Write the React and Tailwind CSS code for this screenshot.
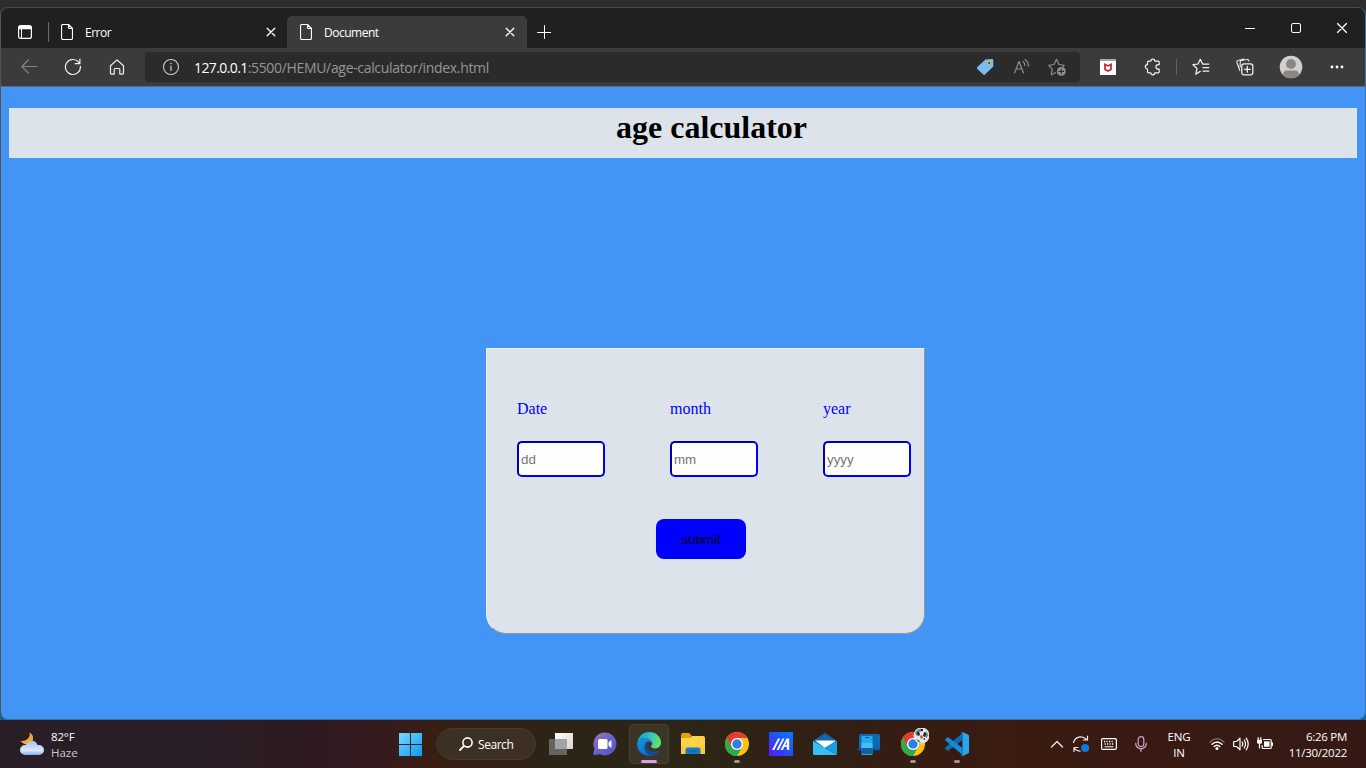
import React from "react";

const ui = "font-['Open_Sans','Noto_Sans',sans-serif]";

function Svg({ w = 24, h = 24, children, className = "" }) {
  return (
    <svg
      width={w}
      height={h}
      viewBox={`0 0 ${w} ${h}`}
      fill="none"
      stroke="none"
      strokeLinecap="round"
      strokeLinejoin="round"
      className={`block shrink-0 ${className}`}
    >
      {children}
    </svg>
  );
}

function Slot({ className, children }) {
  return <div className={`flex h-full shrink-0 items-center justify-center ${className}`}>{children}</div>;
}

const FileIcon = () => (
  <Svg w={12} h={16}>
    <path d="M2 .5h5.5l4 4V14a1.5 1.5 0 0 1-1.500 1.500H2A1.500 1.500 0 0 1 .5 14V2A1.500 1.500 0 0 1 2 .5zM7.500.5V3.500a1 1 0 0 0 1 1h3" stroke="#fff" strokeWidth="1.2" />
  </Svg>
);

const CloseIcon = ({ s = 8 }) => (
  <Svg w={10} h={10}>
    <path d={s === 8 ? "M1.200 1.200l7.600 7.600M8.800 1.200L1.200 8.800" : "M.2.2l9.600 9.600M9.800.2L.2 9.800"} stroke="#fff" strokeWidth="1.300" />
  </Svg>
);

function TabStrip() {
  return (
    <div className="flex h-10 shrink-0 bg-[#202020]">
      <div className="flex h-full flex-1 pt-2">
        <Slot className="w-[47px]">
          <Svg w={14} h={14}>
            <rect x=".6" y=".6" width="12.800" height="12.800" rx="2" stroke="#fff" strokeWidth="1.200" />
            <path d="M1 1h12v3.200H1z" fill="#fff" />
            <path d="M3.500 4v9" stroke="#fff" strokeWidth="1" />
          </Svg>
        </Slot>
        <div className="mt-1.5 h-5 w-px bg-[#6a6a6a]" />
        <div className="flex h-full w-[238px] items-center pr-[11px] pl-3">
          <FileIcon />
          <span className="ml-3 flex-1 pt-px text-[12px] leading-4 font-medium tracking-[-0.5px] text-white">Error</span>
          <CloseIcon />
        </div>
        <div className="flex h-full w-[240px] items-center rounded-t-[5px] bg-[#3b3b3b] pr-3 pl-[13px]">
          <FileIcon />
          <span className="ml-3 flex-1 pt-px text-[12px] leading-4 font-medium tracking-[-0.5px] text-white">Document</span>
          <CloseIcon />
        </div>
        <Slot className="w-[34px]">
          <Svg w={14} h={14}>
            <path d="M7.500.5v13M.5 7.500h13.500" stroke="#fff" strokeWidth="1" />
          </Svg>
        </Slot>
      </div>
      <div className="flex h-full">
        <Slot className="w-[46px]">
          <Svg w={10} h={10}><path d="M.5 5.500h9" stroke="#fff" /></Svg>
        </Slot>
        <Slot className="w-[46px]">
          <Svg w={10} h={10}><rect x=".5" y=".5" width="9" height="9" rx="1.500" stroke="#fff" /></Svg>
        </Slot>
        <Slot className="w-[46px]"><CloseIcon s={10} /></Slot>
      </div>
    </div>
  );
}

function Toolbar() {
  return (
    <div className="flex h-[39px] shrink-0 items-center border-b border-[#68686a] bg-[#3b3b3b]">
      <Slot className="ml-1.5 w-11">
        <Svg w={16} h={16}><path d="M15.500 7.500H.8M7.300 1L.8 7.500 7.300 14" stroke="#858585" strokeWidth="1.100" /></Svg>
      </Slot>
      <Slot className="w-11">
        <Svg w={18} h={18}><path d="M16.400 8.300A7.500 7.500 0 1 1 14.700 4.200L15.900 5.600M15.900 1v4.700h-4.700" stroke="#f2f2f2" strokeWidth="1.200" /></Svg>
      </Slot>
      <Slot className="w-11">
        <Svg w={16} h={16}><path d="M1.500 6.800L8 .9l6.500 5.900v7.300a1 1 0 0 1-1 1h-2.700v-4.600a1 1 0 0 0-1-1H6.200a1 1 0 0 0-1 1v4.600H2.500a1 1 0 0 1-1-1z" stroke="#f2f2f2" strokeWidth="1.200" /></Svg>
      </Slot>
      <div className="ml-1.5 flex h-[30px] w-[935px] items-center rounded-[4px] bg-[#2b2b2b] pr-[5px] pl-[17px]">
        <Svg w={18} h={18}>
          <circle cx="9" cy="9" r="7.500" stroke="#cfcfcf" strokeWidth="1.100" />
          <path d="M9 8v4.500" stroke="#cfcfcf" strokeWidth="1.200" />
          <circle cx="9" cy="5.600" r=".8" fill="#cfcfcf" />
        </Svg>
        <div className="ml-3.5 flex-1 pt-px text-[14px] leading-5 tracking-[-0.33px] whitespace-nowrap text-[#969696]">
          <span className="font-medium tracking-[-0.6px] text-white">127.0.0.1</span>:5500/HEMU/age-calculator/index.html
        </div>
        <Slot className="w-9">
          <Svg w={18} h={18}>
            <path d="M9.500 1.500L16 1q1.400 0 1.300 1.400v6L9 16.500q-.9.800-1.800 0L1.300 11q-.9-1 0-1.900z" fill="#7cbcf0" />
            <circle cx="13.200" cy="5" r="2" fill="#e0b42c" /><circle cx="13.200" cy="5" r=".9" fill="#2f3438" />
          </Svg>
        </Slot>
        <Slot className="w-9">
          <Svg w={18} h={18}>
            <path d="M2.500 15L7 3.500 11.500 15M4.200 11h5.600" stroke="#8c8c8c" strokeWidth="1.200" />
            <path d="M11 3.500q2 1.700 1.800 4M13 1.500q3.800 2.500 3.300 6.600" stroke="#8c8c8c" strokeWidth="1.200" />
          </Svg>
        </Slot>
        <Slot className="w-9">
          <Svg w={18} h={18}>
            <path d="M7.500 14.700l-4.200 2.100.9-5.600L.8 7.300l5.200-.8L8.500 1.300l2.500 5.200 5.200.8-1 1.200" stroke="#8c8c8c" strokeWidth="1.200" />
            <circle cx="13.300" cy="13.400" r="4.400" fill="#919191" />
            <path d="M13.300 11.100v4.600M11 13.400h4.600" stroke="#2b2b2b" strokeWidth="1.100" />
          </Svg>
        </Slot>
      </div>
      <Slot className="ml-1.5 w-11">
        <Svg w={16} h={16}>
          <path d="M0 0h16v16H0z" fill="#fff" /><path d="M0 0h16v2H0z" fill="#aaa6a6" />
          <path d="M5 10.400V5.300l3 1.600 3-1.600v5.100L8 12z" stroke="#c9202c" strokeWidth="1.700" strokeLinejoin="miter" />
        </Svg>
      </Slot>
      <Slot className="w-[46px]">
        <Svg w={18} h={18}>
          <path d="M4.500 3.200h2.300a2 2 0 0 1 4 0h3.400q1 0 1 1v2.400h-1a2.200 2.200 0 0 0 0 4.600h1v2.600q0 1-1 1h-3.400a2 2 0 0 1-4 0H4.500q-1 0-1-1v-2.800a2.150 2.150 0 0 1 0-4.300V4.200q0-1 1-1z" stroke="#f2f2f2" strokeWidth="1.200" />
        </Svg>
      </Slot>
      <div className="h-4 w-px bg-[#606060]" />
      <Slot className="w-12">
        <Svg w={18} h={18}>
          <path d="M8.300 13.300l-4.400 2.900 1.100-5.700L1 6.700l5-.7 2.300-4.700L10.600 6h6.200M11 9.500h5.800M11 13h5.800" stroke="#f2f2f2" strokeWidth="1.250" />
        </Svg>
      </Slot>
      <Slot className="w-10">
        <Svg w={18} h={18}>
          <path d="M3.800 12.500L1 4.700q-.5-1.600 1-2.200L7.800 1M4.200 9V4q0-1.500 1.500-1.500l5-1q1.700-.4 2.200 1.500" stroke="#e5e5e5" strokeWidth="1.200" />
          <rect x="5.800" y="5.800" width="11" height="11" rx="2.200" fill="#3b3b3b" stroke="#f2f2f2" strokeWidth="1.250" />
          <path d="M11.300 8.400v5.800M8.400 11.300h5.800" stroke="#f2f2f2" strokeWidth="1.300" />
        </Svg>
      </Slot>
      <Slot className="w-[52px]">
        <Svg w={24} h={24}>
          <clipPath id="avatar"><circle cx="12" cy="12" r="11.300" /></clipPath>
          <g clipPath="url(#avatar)">
            <path d="M0 0h24v24H0z" fill="#d2d0ce" />
            <circle cx="12" cy="9" r="5" fill="#8c8782" />
            <path d="M4 24q-1-8 3-8.500h10q4 .5 3 8.500z" fill="#8c8782" />
          </g>
        </Svg>
      </Slot>
      <Slot className="w-10">
        <Svg w={14} h={4}>
          <circle cx="2" cy="2" r="1.400" fill="#fff" /><circle cx="7" cy="2" r="1.400" fill="#fff" /><circle cx="12" cy="2" r="1.400" fill="#fff" />
        </Svg>
      </Slot>
    </div>
  );
}

const fields = [
  { label: "Date", hint: "dd" },
  { label: "month", hint: "mm" },
  { label: "year", hint: "yyyy" },
];

function Page() {
  return (
    <main className="flex flex-1 flex-col items-start bg-[#4295f5] px-2 pt-[21px]">
      <h1 className="h-[50px] w-full bg-[#dce3ea] pt-px pl-[57px] text-center font-['Liberation_Serif',serif] text-[32px] leading-[37px] font-bold text-black">
        age calculator
      </h1>
      <form className="mt-[190px] ml-[477px] flex h-[286px] w-[439px] flex-col rounded-b-[20px] border border-t-[#ececec] border-r-[#989898] border-b-[#989898] border-l-[#ececec] bg-[#dce3ea] pt-[51px] pl-[30px]">
        <div className="flex gap-[65px]">
          {fields.map((f) => (
            <label key={f.label} className="flex w-[88px] shrink-0 flex-col gap-[23px] font-['Liberation_Serif',serif] text-[16px] leading-[18px] text-[#0000ff]">
              {f.label}
              <input
                placeholder={f.hint}
                className="h-9 w-[88px] rounded-[5px] border-2 border-t-[#0000b0] border-r-[#0000f4] border-b-[#0000f4] border-l-[#0000b0] bg-white px-0.5 py-px font-['Liberation_Sans',sans-serif] text-[13.333px] text-black placeholder:text-[#757575]"
              />
            </label>
          ))}
        </div>
        <button type="button" className="mt-[42px] ml-[139px] h-10 w-[90px] rounded-lg bg-[#0000ff] pt-0.5 font-['Liberation_Sans',sans-serif] text-[13.333px] text-black">
          submit
        </button>
      </form>
    </main>
  );
}

const Chrome = ({ badge }) => (
  <Svg w={32} h={32}>
    <g strokeLinejoin="miter">
      <circle cx="16" cy="16" r="12" fill="#fbc116" />
      <path d="M16 10h10.400A12 12 0 0 0 5.600 10l5.200 9z" fill="#e33b2e" />
      <path d="M10.800 19L5.600 10A12 12 0 0 0 16 28l5.200-9z" fill="#2da94f" />
      <circle cx="16" cy="16" r="6" fill="#fff" /><circle cx="16" cy="16" r="4.700" fill="#2f7de9" />
    </g>
    {badge && (
      <g>
        <circle cx="24.500" cy="7.500" r="8" fill="#e4e9ea" />
        <path d="M18 5q2-4 6-4.500l2 2-4 2-2 4zM29 3l2.500 4-2 3-2-2zM19 11l3 1 2 3-3-1z" fill="#6d8388" />
        <path d="M20 4l2 0 1 3-2 1zM27 4l2 1-1 4-2-1zM24 1l2 0 0 2-2 0zM26 11l2-1 0 2z" fill="#171c20" />
        <path d="M23 8l2-1 1 3-2 1z" fill="#9b5c47" />
      </g>
    )}
  </Svg>
);

const Edge = () => (
  <Svg w={24} h={24}>
    <defs>
      <linearGradient id="eg" x1="0" y1="6" x2="24" y2="12" gradientUnits="userSpaceOnUse"><stop stopColor="#159bdf" /><stop offset=".5" stopColor="#35c1c4" /><stop offset="1" stopColor="#6bea4c" /></linearGradient>
      <linearGradient id="eb" x1="2" y1="7" x2="9" y2="24" gradientUnits="userSpaceOnUse"><stop stopColor="#1593dc" /><stop offset="1" stopColor="#0a6fc9" /></linearGradient>
    </defs>
    <path d="M.2 11C1 4.500 6 0 12.200 0 19 0 24 5 24 10.500c0 3.500-2.500 6-6 6-2.500 0-4-.9-4-1.900 0-.8 1.200-1.300 1.200-3C15.200 8.600 12 6 8 6 4.500 6 1.500 8 .2 11z" fill="url(#eg)" />
    <path d="M0 12C.5 8.500 4 6 8 6c4 0 7.200 2.400 7.200 5.600-1-1.600-2.500-2.300-4-2-3 .6-4.200 4-2.600 7.400 2.200 4.500 7.200 6.200 10.400 4.600A12 12 0 0 1 0 12z" fill="url(#eb)" />
    <path d="M9.500 10.500c-3 2.500-3 8 1 11.500 1.700 1.300 4 2 5.500 1.700 2.500-.6 4.600-2 6.300-4.300.3-.5 0-.9-.6-.6C16 21.500 10 18.500 9.500 14.500c-.1-1.500.3-3 1.500-4.300z" fill="#124c99" />
  </Svg>
);

const Folder = () => (
  <Svg w={24} h={24}>
    <path d="M0 3q0-2 2-2h6l3 3h-1L7 8H0z" fill="#dfa200" />
    <path d="M0 6h8l3-2h11q2 0 2 2v16H0z" fill="#ffd149" />
    <path d="M0 14h24v8H0z" fill="#fdc83b" />
    <path d="M4.500 22V18q0-2.500 2.500-2.500h10q2.500 0 2.500 2.500v4z" fill="#127cc5" /><path d="M8.500 19h7" stroke="#075e9d" />
  </Svg>
);

function TaskItem({ children, dot, active }) {
  return (
    <div className="flex h-12 w-11 shrink-0 items-center justify-center">
      <div className={active ? "relative flex size-10 items-center justify-center rounded-[4px] border border-[#484233] bg-[#3b3527]" : "relative flex size-10 items-center justify-center"}>
        {children}
        {active && <span className="absolute bottom-0 left-[11px] h-[3px] w-4 rounded-full bg-[#dc9ce4]" />}
        {dot && <span className="absolute bottom-px left-[17px] h-[3px] w-1.5 rounded-full bg-[#9d958b]" />}
      </div>
    </div>
  );
}

function Taskbar() {
  return (
    <footer className="flex h-12 shrink-0 items-center bg-[linear-gradient(90deg,#291e26_0px,#291e26_190px,#2e1a22_300px,#341a1d_380px,#391e14_430px,#332214_490px,#2c2516_570px,#2c2617_690px,#302114_790px,#361c12_910px,#3a1b12_1040px,#351914_1366px)] text-[12px] leading-4 text-white">
      <div className="flex w-[388px] items-center pl-5">
        <Svg w={24} h={24}>
          <defs><linearGradient id="cl" x1="0" y1="8" x2="0" y2="23" gradientUnits="userSpaceOnUse"><stop stopColor="#9fbdec" /><stop offset=".7" stopColor="#d8e8fd" /><stop offset="1" stopColor="#82a9e9" /></linearGradient></defs>
          <path d="M9.500 0q6 5 2.300 10.500Q6 15 .3 9q4.500.5 7.500-2.200Q10.500 4 9.500 0z" fill="#f4a72d" />
          <path d="M5 23a5 5 0 0 1 0-10h1a6 6 0 0 1 11.500 0H19a5 5 0 0 1 0 10z" fill="url(#cl)" />
        </Svg>
        <div className="ml-[7px] pt-0.5 text-[11.500px] tracking-[-0.15px]">
          <div className="font-medium">82°F</div>
          <div className="tracking-[0px] text-[#cdc8cb]">Haze</div>
        </div>
      </div>
      <Slot className="w-11">
        <Svg w={24} h={24}>
          <defs><linearGradient id="win" x1="0" y1="0" x2="24" y2="24" gradientUnits="userSpaceOnUse"><stop stopColor="#7adcff" /><stop offset="1" stopColor="#079bf4" /></linearGradient></defs>
          <path d="M1 1h11v11H1zM13 1h11v11H13zM1 13h11v11H1zM13 13h11v11H13z" fill="url(#win)" />
        </Svg>
      </Slot>
      <div className="mr-[3px] ml-1 flex h-8 w-[100px] items-center rounded-full border border-[#44392d] bg-[#3b3023] pl-[22px]">
        <Svg w={14} h={14}><circle cx="8.500" cy="5.500" r="4.600" stroke="#fff" strokeWidth="1.600" /><path d="M5 8.900L1 13" stroke="#fff" strokeWidth="1.800" /></Svg>
        <span className="ml-[5px] pt-0.5 font-medium tracking-[-0.45px]">Search</span>
      </div>
      <TaskItem>
        <Svg w={24} h={24}>
          <defs><linearGradient id="tv" x1="6" y1="1" x2="24" y2="17" gradientUnits="userSpaceOnUse"><stop stopColor="#fff" /><stop offset="1" stopColor="#d5d5d5" /></linearGradient></defs>
          <path d="M6 1h18v16H6z" fill="url(#tv)" /><path d="M0 7h18v16H0z" fill="#646464" /><path d="M6 7h12v10H6z" fill="#a3a3a3" />
        </Svg>
      </TaskItem>
      <TaskItem>
        <Svg w={24} h={24}>
          <defs><linearGradient id="chat" x1="2" y1="2" x2="20" y2="23" gradientUnits="userSpaceOnUse"><stop stopColor="#9b70b2" /><stop offset=".5" stopColor="#6764cc" /><stop offset="1" stopColor="#5058bd" /></linearGradient></defs>
          <path d="M1.500 23q-1.500 0-1.100-1.500l1.100-4.700A11.500 11.500 0 1 1 7 22.300z" fill="url(#chat)" />
          <rect x="5" y="7" width="9.500" height="10" rx="1.500" fill="#fff" /><path d="M15.500 10.500L18.500 8v8l-3-2.500z" fill="#fff" />
        </Svg>
      </TaskItem>
      <TaskItem active><Edge /></TaskItem>
      <TaskItem><Folder /></TaskItem>
      <TaskItem dot><Chrome /></TaskItem>
      <TaskItem>
        <Svg w={24} h={24}>
          <defs><linearGradient id="ma" x1="0" y1="24" x2="24" y2="0" gradientUnits="userSpaceOnUse"><stop stopColor="#5b18f4" /><stop offset=".5" stopColor="#234ef5" /><stop offset="1" stopColor="#087bff" /></linearGradient></defs>
          <path d="M0 0h24v24H0z" fill="url(#ma)" />
          <path d="M3 18L9 6.500h2.200L5.300 18zM7.500 18l6-11.500h2L9.700 18z" fill="#f5f6ff" />
          <path fillRule="evenodd" d="M11.500 18L17.500 6.500h2.700V18h-2.300v-3h-2.600L13.800 18zM16.300 13.200h1.600V10z" fill="#f5f6ff" />
        </Svg>
      </TaskItem>
      <TaskItem>
        <Svg w={24} h={24}>
          <path d="M0 9L12 1l12 8v7H0z" fill="#1464ad" /><path d="M2 8.500h20v1L12 16z" fill="#fff" />
          <path d="M0 9l24 14H1q-1 0-1-1z" fill="#35bff3" /><path d="M24 9v13q0 1-1 1L12 15.500z" fill="#189ee5" />
        </Svg>
      </TaskItem>
      <TaskItem>
        <Svg w={24} h={24}>
          <rect x="2" y="2" width="21" height="15" rx="1.500" fill="#1268ae" /><path d="M0 16.500h24l-1.500 2H1z" fill="#0b5595" />
          <rect x="4.500" y="4" width="11" height="19" rx="1.200" fill="#24a8ee" /><path d="M4.500 11h11v5h-11z" fill="#46bcf4" /><path d="M4.500 16h11v6h-11z" fill="#11629f" /><path d="M8.500 5.500h3.500" stroke="#07579a" />
        </Svg>
      </TaskItem>
      <TaskItem dot><Chrome badge /></TaskItem>
      <TaskItem dot>
        <Svg w={24} h={24}>
          <path d="M17.500 1v7L3.500 18.500q-.8.500-1.400 0L.5 17q-.8-.8 0-1.500z" fill="#0a6fb8" />
          <path d="M17.500 23v-7L3.500 5.500q-.8-.5-1.400 0L.5 7q-.8.800 0 1.500z" fill="#168bd5" />
          <path d="M17.500.1l5.500 2.400q1 .5 1 1.500v16q0 1-1 1.500l-5.500 2.400q-.9.200-1.600-.5.900.3 1.600-.7V1.300q-.7-1-1.600-.7.700-.7 1.600-.5z" fill="#29a6ef" />
        </Svg>
      </TaskItem>
      <div className="ml-auto flex h-full items-center">
        <Slot className="w-6"><Svg w={14} h={8}><path d="M1.500 7L7 1.500 12.500 7" stroke="#eee" strokeWidth="1.300" /></Svg></Slot>
        <Slot className="w-6">
          <Svg w={18} h={18}>
            <path d="M1.500 7.500C3 1.500 10 0 14.500 4.500M15.500 1v4h-4M2 16.500v-4h4M2.500 13.500q2 2.500 5.500 2.700" stroke="#f1eae8" strokeWidth="1.200" />
            <circle cx="13.200" cy="13" r="4" fill="#087bdc" />
          </Svg>
        </Slot>
        <Slot className="w-8">
          <Svg w={16} h={12}>
            <rect x=".6" y=".6" width="14.800" height="10.800" rx="1.200" stroke="#fff" strokeWidth="1.200" />
            <path d="M3 3.500h10M3.500 6h9.500" stroke="#fff" strokeWidth="1.300" strokeDasharray="1.200 1.300" strokeLinecap="butt" /><path d="M4 8.700h8" stroke="#fff" strokeWidth="1.100" />
          </Svg>
        </Slot>
        <Slot className="w-8">
          <Svg w={12} h={16}><rect x="3.200" y=".6" width="5.600" height="10" rx="2.800" stroke="#cfa0cf" strokeWidth="1.200" /><path d="M.7 7.500a5.300 5.300 0 0 0 10.600 0M6 13v2.300" stroke="#cfa0cf" strokeWidth="1.300" /></Svg>
        </Slot>
        <div className="w-11 pt-0.5 text-center text-[11.500px] font-medium tracking-[-0.2px]"><div>ENG</div><div>IN</div></div>
        <Slot className="ml-1 w-6">
          <Svg w={16} h={14}>
            <path d="M.8 5.200q7.200-7 14.400 0" stroke="#8b7670" strokeWidth="1.200" /><path d="M3 7.300q5-4.800 10 0M5.200 9.500q2.800-2.700 5.600 0" stroke="#fff" strokeWidth="1.400" /><circle cx="8" cy="11.500" r="1.500" fill="#fff" />
          </Svg>
        </Slot>
        <Slot className="w-6">
          <Svg w={16} h={14}><path d="M.7 4.500h2.800L7 1.200v11.600L3.500 9.500H.7zM9.200 5q1.300 2 0 4M11.200 3q2.700 4 0 8M13.200 1.200q4 5.800 0 11.600" stroke="#fff" strokeWidth="1.200" /></Svg>
        </Slot>
        <Slot className="w-6">
          <Svg w={16} h={14}>
            <path d="M6.500 2.500h6.700q1 0 1 1v7q0 1-1 1h-7q-1 0-1-1V8.500" stroke="#fff" strokeWidth="1.200" /><path d="M7 4.300h5.500v5.500H7z" fill="#fff" /><path d="M15.300 6v2.500" stroke="#fff" strokeWidth="1.400" />
            <path d="M0 2.700h5v2.500q0 1.500-1.500 1.500h-2Q0 6.700 0 5.200z" fill="#fff" /><path d="M1.200.7v2M3.800.7v2M2.500 7v4" stroke="#fff" strokeWidth="1.200" />
          </Svg>
        </Slot>
        <div className="mr-[19px] w-[70px] pt-0.5 text-right text-[11.500px] font-medium tracking-[-0.28px] whitespace-nowrap"><div>6:26 PM</div><div>11/30/2022</div></div>
      </div>
    </footer>
  );
}

export default function App() {
  return (
    <div className={`flex h-[768px] w-[1366px] flex-col overflow-hidden bg-[#2d2d2d] ${ui}`}>
      <div className="flex h-[720px] flex-col bg-[linear-gradient(180deg,#2d2d2d_0px,#2d2d2d_36px,#3c3c3c_36px,#3c3c3c_94px,#484848_94px,#484848_694px,#18619e_700px)] pt-[7px]">
        <div className="flex flex-1 flex-col overflow-hidden rounded-[8px] border border-t-[#4b4b4b] border-r-[#3c73b3] border-b-[#36719f] border-l-[#555555]">
          <TabStrip />
          <Toolbar />
          <Page />
        </div>
      </div>
      <Taskbar />
    </div>
  );
}
